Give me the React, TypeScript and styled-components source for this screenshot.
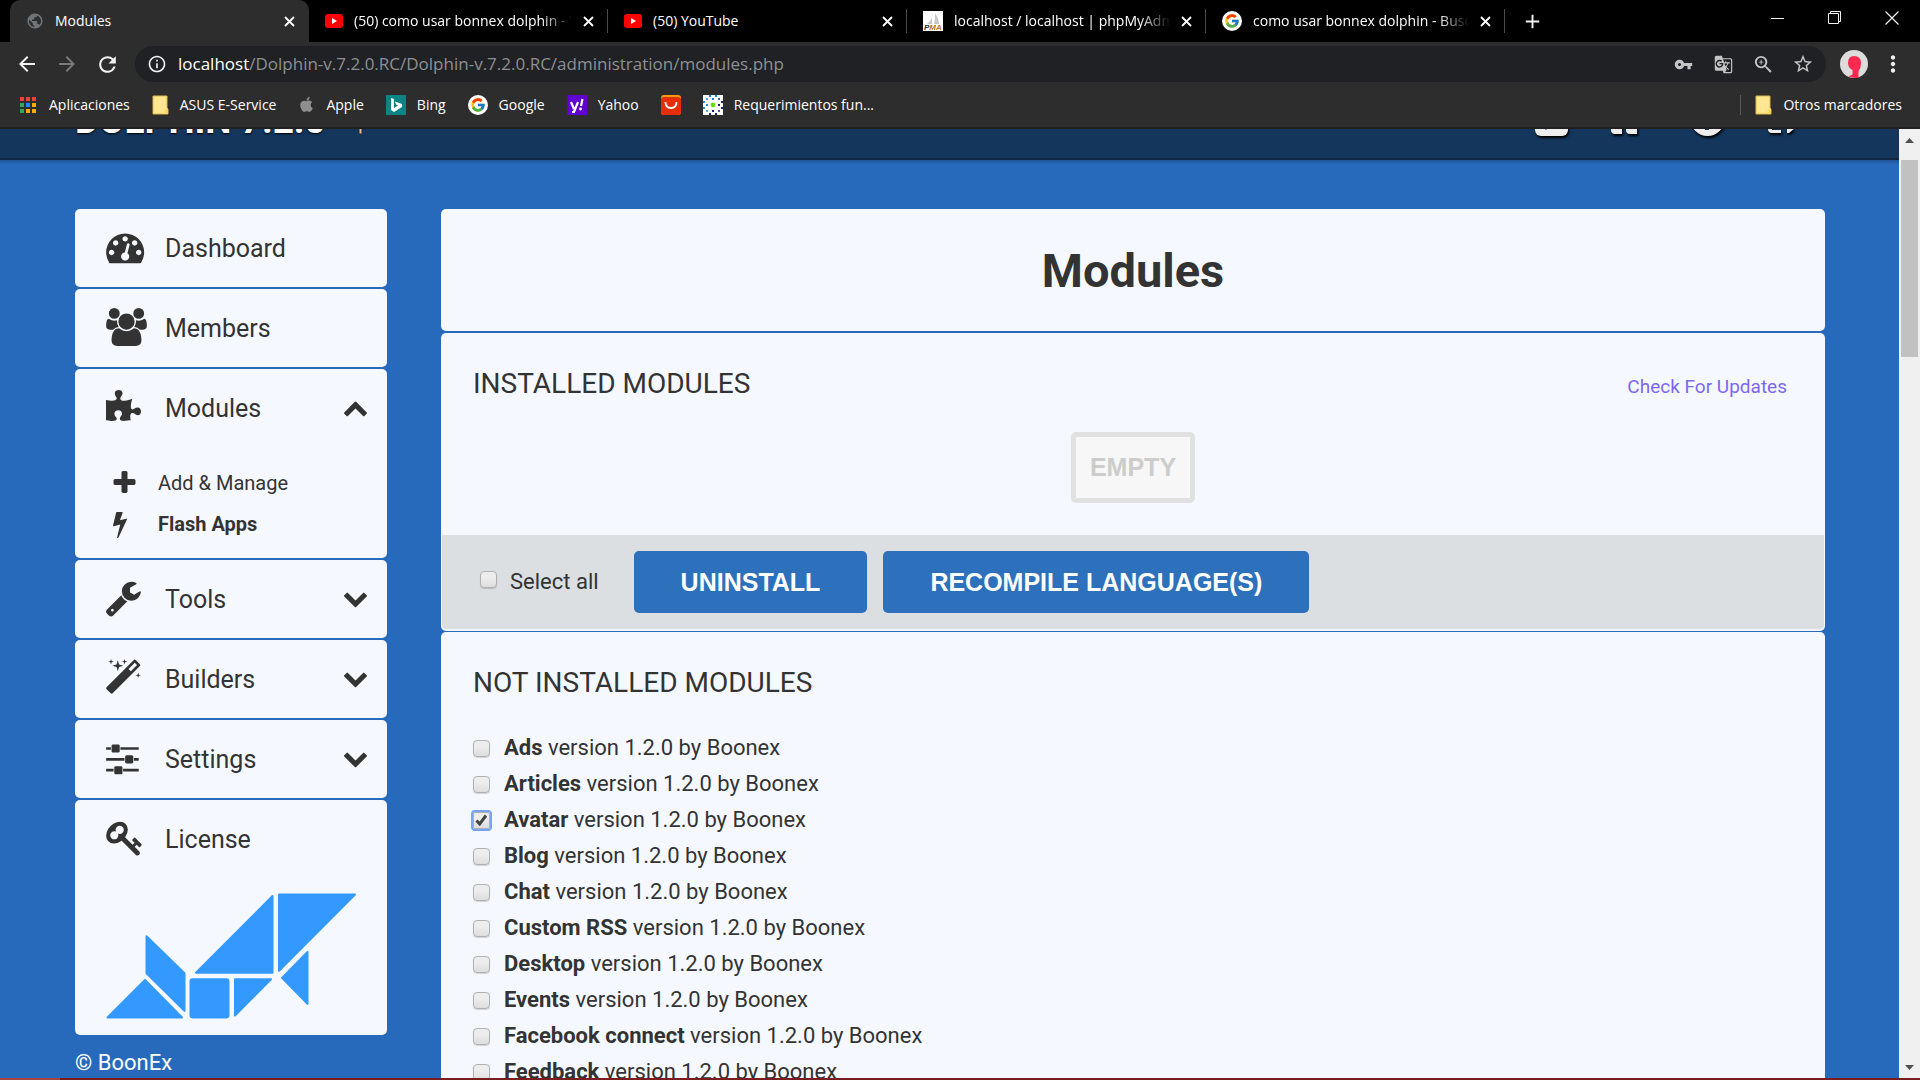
import React, { useState } from "react";
import styled, { createGlobalStyle, css } from "styled-components";
import { FaPuzzlePiece, FaApple } from "react-icons/fa";
import { FcGoogle } from "react-icons/fc";
import { MdArrowBack, MdArrowForward, MdRefresh, MdInfoOutline, MdVpnKey, MdGTranslate, MdZoomIn, MdStarBorder, MdMoreVert, MdAdd, MdPublic } from "react-icons/md";

const Global = createGlobalStyle`
  * { box-sizing: border-box; }
  body { margin: 0; background: #276abc; color: #333; font-family: Roboto, Arial, sans-serif; overflow: hidden; }
  button { border: 0; padding: 0; background: none; color: inherit; font: inherit; cursor: pointer; }
  a { color: inherit; text-decoration: none; }
  h1, h2, ul { margin: 0; padding: 0; }
  ul { list-style: none; }
`;

const Window = styled.div`
  height: 100vh;
  display: flex;
  flex-direction: column;
  overflow: hidden;
`;

/* ---------- browser frame ---------- */
const Chrome = styled.div`
  flex: none;
  background: #2d2d2d;
  color: #fff;
  font-family: "Open Sans", "Noto Sans", sans-serif;
  font-size: 14px;
  border-bottom: 2px solid #202020;
`;
const TabStrip = styled.div`
  display: flex;
  align-items: stretch;
  height: 42px;
  padding-left: 10px;
  background: #000;
`;
const Tab = styled.div<{ $active?: boolean }>`
  width: 299px;
  display: flex;
  align-items: center;
  gap: 11px;
  padding: 0 14px 0 16px;
  ${(p) =>
    p.$active
      ? css`background: #2d2d2d; border-radius: 10px 10px 0 0;`
      : css`background: linear-gradient(#4a4a4a, #4a4a4a) right 9px / 1px 24px no-repeat;`}
`;
const TabTitle = styled.button<{ $fade?: boolean }>`
  flex: 1;
  min-width: 0;
  overflow: hidden;
  white-space: nowrap;
  text-align: left;
  line-height: 20px;
  ${(p) => p.$fade && css`mask-image: linear-gradient(to right, #000 86%, transparent);`}
`;
const IconButton = styled.button<{ $dim?: boolean }>`
  display: flex;
  align-items: center;
  justify-content: center;
  color: ${(p) => (p.$dim ? "#797979" : "#f1f1f1")};
`;
const NewTab = styled(IconButton)`
  width: 54px;
`;
const WindowControls = styled.div`
  margin-left: auto;
  display: flex;
  height: 36px;
`;
const WindowButton = styled(IconButton)`
  width: 57px;
`;
const Toolbar = styled.div`
  display: flex;
  align-items: center;
  height: 44px;
  padding: 0 14px 0 7px;
`;
const NavButton = styled(IconButton)`
  width: 40px;
`;
const Address = styled.div`
  flex: 1;
  display: flex;
  align-items: center;
  height: 36px;
  margin-left: 8px;
  padding: 0 3px 0 12px;
  border-radius: 18px;
  background: #202124;
`;
const AddressText = styled.div`
  flex: 1;
  margin-left: 11px;
  font-size: 17px;
  line-height: 24px;
  color: #8d9094;
  span { color: #fff; }
`;
const Profile = styled.button`
  display: flex;
  margin: 0 12px 0 14px;
`;
const Bookmarks = styled.div`
  display: flex;
  align-items: center;
  height: 41px;
  gap: 22px;
  padding: 0 18px 4px 19px;
`;
const Bookmark = styled.a`
  display: flex;
  align-items: center;
  gap: 11px;
  line-height: 20px;
  white-space: nowrap;
`;
const OtherBookmarks = styled(Bookmark)`
  margin-left: auto;
  padding-left: 14px;
  border-left: 1px solid #5a5a5a;
`;

/* ---------- page ---------- */
const Viewport = styled.div`
  flex: 1;
  min-height: 0;
  display: flex;
`;
const Page = styled.div`
  flex: 1;
  min-width: 0;
  overflow: hidden;
`;
const TopBar = styled.header`
  display: flex;
  align-items: flex-end;
  height: 31px;
  padding: 0 74px 0 75px;
  overflow: hidden;
  background: #14365c;
  border-bottom: 2px solid #0f2742;
`;
const TopShadow = styled.div`
  height: 5px;
  background: linear-gradient(#1f5596, #276abc);
`;
const Brand = styled.a`
  display: flex;
  align-items: flex-end;
  gap: 33px;
  color: #fff;
  font-size: 37px;
  font-weight: 700;
  line-height: 40px;
  padding-bottom: 17px;
  text-shadow: 0 1px 2px #000;
  white-space: nowrap;
`;
const TopIcons = styled.nav`
  margin-left: auto;
  display: flex;
  padding-bottom: 22px;
  filter: drop-shadow(1px 2px 1px #000);
`;
const Columns = styled.div`
  display: grid;
  grid-template-columns: 312px minmax(0, 1fr);
  column-gap: 54px;
  align-items: start;
  padding: 44px 74px 0 75px;
`;
const Card = styled.section`
  background: #f5f9ff;
  border-radius: 5px;
`;
const Side = styled.aside`
  display: flex;
  flex-direction: column;
  gap: 2px;
`;
const MenuItem = styled.a`
  display: flex;
  align-items: center;
  height: 78px;
  padding: 0 20px 2px 31px;
  font-size: 25px;
  line-height: 32px;
`;
const MenuLabel = styled.span`
  flex: 1;
  margin-left: 18px;
  padding-top: 4px;
`;
const SubMenu = styled.ul`
  padding: 15px 0 14px 38px;
`;
const SubItem = styled.a<{ $strong?: boolean }>`
  display: grid;
  grid-template-columns: 45px 1fr;
  align-items: center;
  height: 41px;
  font-size: 20px;
  font-weight: ${(p) => (p.$strong ? 700 : 400)};
`;
const LogoLink = styled.a`
  display: block;
  padding: 15px 31px 16px;
  svg { display: block; }
`;
const Copyright = styled.p`
  margin: 12px 0 0;
  color: #fff;
  font-size: 22px;
  line-height: 28px;
`;
const Main = styled.main`
  display: flex;
  flex-direction: column;
`;
const TitleCard = styled(Card)`
  padding: 32px 0 30px;
  margin-bottom: 2px;
  text-align: center;
`;
const Title = styled.h1`
  font-size: 47px;
  line-height: 60px;
  font-weight: 700;
`;
const InstalledCard = styled(Card)`
  padding: 0 1px 2px;
  margin-bottom: 1px;
`;
const CardHead = styled.div`
  display: flex;
  align-items: baseline;
  justify-content: space-between;
  padding: 33px 37px 0 31px;
`;
const Heading = styled.h2`
  font-size: 28px;
  line-height: 36px;
  font-weight: 400;
`;
const UpdateLink = styled.a`
  color: #7b68ee;
  font-size: 19px;
`;
const Empty = styled.div`
  width: fit-content;
  margin: 30px auto 32px;
  padding: 14px;
  border: 5px solid #e1e1e1;
  border-radius: 5px;
  background: #f7f7f7;
  color: #ccc;
  font: 700 25px/33px "Liberation Sans", Arial, sans-serif;
`;
const ActionBar = styled.div`
  display: flex;
  align-items: center;
  gap: 16px;
  padding: 16px 38px;
  background: #dbdfe2;
  border-radius: 0 0 4px 4px;
`;
const Check = styled.input`
  appearance: none;
  flex: none;
  width: 17px;
  height: 17px;
  margin: 0;
  border: 1px solid #b0b0b0;
  border-radius: 4px;
  background: linear-gradient(#ededed 38%, #dedede);
  box-shadow: 0 1px 1px rgba(0, 0, 0, 0.15);
  &:checked {
    background: url("data:image/svg+xml,%3Csvg xmlns='http://www.w3.org/2000/svg' viewBox='0 0 17 17'%3E%3Cpath d='M3.500 8.500l3.200 3.500L13 3.500' fill='none' stroke='%23444' stroke-width='3'/%3E%3C/svg%3E") center / 17px no-repeat, linear-gradient(#ededed 38%, #dedede);
    border-radius: 2px;
    outline: 2px solid #76a5f5;
    outline-offset: 0;
  }
`;
const SelectAll = styled.label`
  display: flex;
  align-items: center;
  gap: 13px;
  margin-right: 19px;
  font-size: 22px;
  line-height: 28px;
  ${Check} { margin-bottom: 6px; }
`;
const Action = styled.button`
  height: 62px;
  padding: 0 47px;
  border-radius: 5px;
  background: #2d70bb;
  color: #fff;
  font: 700 25px/32px "Liberation Sans", Arial, sans-serif;
`;
const AvailableCard = styled(Card)`
  padding: 33px 32px 40px;
`;
const ModuleList = styled.ul`
  margin-top: 29px;
`;
const ModuleRow = styled.label`
  display: flex;
  align-items: center;
  gap: 14px;
  height: 36px;
  font-size: 22px;
  line-height: 28px;
`;

const ScrollTrack = styled.div`
  flex: none;
  width: 21px;
  display: flex;
  flex-direction: column;
  align-items: center;
  background: #f0f0f0;
`;
const ScrollArrow = styled(IconButton)`
  height: 22px;
`;
const ScrollThumb = styled.div`
  width: 17px;
  height: 197px;
  margin: 9px 0 auto;
  background: #c1c1c1;
`;
const BottomEdge = styled.div`
  flex: none;
  height: 2px;
  background: linear-gradient(to right, #a44543 60px, #7a1c1e 60px);
`;

/* ---------- icons ---------- */
const glyphs = {
  dashboard: { x: 0, d: "M384 1152q0-53-37.5-90.5t-90.5-37.5-90.5 37.5-37.5 90.5 37.5 90.5 90.5 37.5 90.5-37.5 37.5-90.5zm192-448q0-53-37.5-90.5t-90.5-37.5-90.5 37.5-37.5 90.5 37.5 90.5 90.5 37.5 90.5-37.5 37.5-90.5zm428 481l101-382q6-26-7.5-48.5t-38.5-29.5-48 6.5-30 39.5l-101 382q-60 5-107 43.5t-63 98.5q-20 77 20 146t117 89 146-20 89-117q16-60-6-117t-72-91zm660-33q0-53-37.5-90.5t-90.5-37.5-90.5 37.5-37.5 90.5 37.5 90.5 90.5 37.5 90.5-37.5 37.5-90.5zm-640-640q0-53-37.5-90.5t-90.5-37.5-90.5 37.5-37.5 90.5 37.5 90.5 90.5 37.5 90.5-37.5 37.5-90.5zm448 192q0-53-37.5-90.5t-90.5-37.5-90.5 37.5-37.5 90.5 37.5 90.5 90.5 37.5 90.5-37.5 37.5-90.5zm320 448q0 261-141 483-19 29-54 29h-1402q-35 0-54-29-141-221-141-483 0-182 71-348t191-286 286-191 348-71 348 71 286 191 191 286 71 348z" },
  members: { x: 0, d: "M593 896q-162 5-265 128h-134q-82 0-138-40.5t-56-118.5q0-353 124-353 6 0 43.5 21t97.500 42.500 119 21.500q67 0 133-23-5 37-5 66 0 139 81 256zm1071 637q0 120-73 189.500t-194 69.500h-874q-121 0-194-69.500t-73-189.500q0-53 3.500-103.500t14-109 26.500-108.500 43-97.500 62-81 85.500-53.500 111.500-20q10 0 43 21.500t73 48 107 48 135 21.500 135-21.500 107-48 73-48 43-21.500q61 0 111.500 20t85.500 53.500 62 81 43 97.500 26.500 108.500 14 109 3.500 103.500zm-1024-1277q0 106-75 181t-181 75-181-75-75-181 75-181 181-75 181 75 75 181zm704 384q0 159-112.500 271.500t-271.500 112.500-271.500-112.500-112.500-271.500 112.500-271.500 271.500-112.500 271.500 112.500 112.500 271.500zm576 225q0 78-56 118.500t-138 40.500h-134q-103-123-265-128 81-117 81-256 0-29-5-66 66 23 133 23 59 0 119-21.500t97.500-42.500 43.500-21q124 0 124 353zm-128-609q0 106-75 181t-181 75-181-75-75-181 75-181 181-75 181 75 75 181z" },
  tools: { x: 90, d: "M448 1472q0-26-19-45t-45-19-45 19-19 45 19 45 45 19 45-19 19-45zm644-420l-682 682q-37 37-90 37-52 0-91-37l-106-108q-38-36-38-90 0-53 38-91l681-681q39 98 114.500 173.500t173.500 114.500zm634-435q0 39-23 106-47 134-164.500 217.500t-258.500 83.500q-185 0-316.500-131.500t-131.500-316.500 131.500-316.500 316.500-131.500q58 0 121.500 16.500t107.500 46.500q16 11 16 28t-16 28l-293 169v224l193 107q5-3 79-48.500t135.500-81 70.500-35.500q15 0 23.500 10t8.500 25z" },
  builders: { x: 90, d: "M1254 581l293-293-107-107-293 293zm447-293q0 27-18 45l-1286 1286q-18 18-45 18t-45-18l-198-198q-18-18-18-45t18-45l1286-1286q18-18 45-18t45 18l198 198q18 18 18 45zm-1351-190l98 30-98 30-30 98-30-98-98-30 98-30 30-98zm350 162l196 60-196 60-60 196-60-196-196-60 196-60 60-196zm930 478l98 30-98 30-30 98-30-98-98-30 98-30 30-98zm-640-640l98 30-98 30-30 98-30-98-98-30 98-30 30-98z" },
  settings: { x: 128, d: "M480 1408v128h-352v-128h352zm352-128q26 0 45 19t19 45v256q0 26-19 45t-45 19h-256q-26 0-45-19t-19-45v-256q0-26 19-45t45-19h256zm160-384v128h-864v-128h864zm-640-512v128h-224v-128h224zm1312 1024v128h-736v-128h736zm-960-1152q26 0 45 19t19 45v256q0 26-19 45t-45 19h-256q-26 0-45-19t-19-45v-256q0-26 19-45t45-19h256zm640 512q26 0 45 19t19 45v256q0 26-19 45t-45 19h-256q-26 0-45-19t-19-45v-256q0-26 19-45t45-19h256zm320 128v128h-224v-128h224zm0-512v128h-864v-128h864z" },
  license: { x: 0, d: "M832 512q0-80-56-136t-136-56-136 56-56 136q0 42 19 83-41-19-83-19-80 0-136 56t-56 136 56 136 136 56 136-56 56-136q0-42-19-83 41 19 83 19 80 0 136-56t56-136zm851 704q0 17-49 66t-66 49q-9 0-28.500-16t-36.500-33-38.500-40-24.500-26l-96 96 220 220q28 28 28 68 0 42-39 81t-81 39q-40 0-68-28l-671-671q-176 131-365 131-163 0-265.500-102.500t-102.500-265.500q0-160 95-313t248-248 313-95q163 0 265.500 102.500t102.500 265.500q0 189-131 365l355 355 96-96q-3-3-26-24.500t-40-38.500-33-36.500-16-28.500q0-17 49-66t66-49q13 0 23 10 6 6 46 44.500t82 79.500 86.500 86 73 78 28.500 41z" },
} as const;

const Glyph = ({ name }: { name: keyof typeof glyphs }) => (
  <svg width="41" height="38" viewBox={`${glyphs[name].x} 0 1920 1792`} fill="currentColor" aria-hidden="true">
    <path d={glyphs[name].d} />
  </svg>
);
const Chevron = ({ up }: { up?: boolean }) => (
  <svg width="23" height="26" viewBox="90 0 1612 1822" fill="currentColor" aria-hidden="true">
    <path transform={up ? "rotate(180 896 1050)" : undefined} d="M1683 808l-742 741q-19 19-45 19t-45-19l-742-741q-19-19-19-45.500t19-45.500l166-165q19-19 45-19t45 19l531 531 531-531q19-19 45-19t45 19l166 165q19 19 19 45.500t-19 45.500z" />
  </svg>
);
const Plus = () => (
  <svg width="23" height="28" viewBox="192 0 1408 1792" fill="currentColor" aria-hidden="true">
    <path d="M1600 736v192q0 40-28 68t-68 28h-416v416q0 40-28 68t-68 28h-192q-40 0-68-28t-28-68v-416h-416q-40 0-68-28t-28-68v-192q0-40 28-68t68-28h416v-416q0-40 28-68t68-28h192q40 0 68 28t28 68v416h416q40 0 68 28t28 68z" />
  </svg>
);
const Bolt = () => (
  <svg width="14" height="28" viewBox="448 0 896 1792" fill="currentColor" aria-hidden="true">
    <path d="M1333 566q18 20 7 44l-540 1157q-13 25-42 25-4 0-14-2-17-5-25.500-19t-4.500-30l197-808-406 101q-4 1-12 1-18 0-31-11-18-15-13-39l201-825q4-14 16-23t28-9h328q19 0 32 12.500t13 29.500q0 8-5 18l-171 463 396-98q8-2 12-2 19 0 34 15z" />
  </svg>
);
const DolphinLogo = () => (
  <svg width="250" height="126" viewBox="0 0 250 124" preserveAspectRatio="none" fill="#3399ff" stroke="#3399ff" strokeWidth="2" strokeLinejoin="round" aria-hidden="true">
    <path d="M90 78.500L166.500 3V78.500zM173 1.500H249L173 76.500zM40.500 42.500L78.500 79V116L40.500 79zM1.500 122.500L39 85.500 76 122.500zM129 85H165L129 120.500zM176 83.500L201.500 58V109z" />
    <rect x="84.500" y="85" width="38" height="37.500" rx="2" />
  </svg>
);
const Folder = () => (
  <svg width="17" height="20" viewBox="0 0 17 20" aria-hidden="true">
    <path d="M1 1h14v12l1 1v5H1z" fill="#ffe693" stroke="#dfb845" />
    <path d="M12.500 19v-4l3-1.500V19z" fill="#ffd75e" />
  </svg>
);
const AppsGrid = () => (
  <svg width="19" height="18" viewBox="0 0 19 18" aria-hidden="true">
    {["#ea4335", "#ea4335", "#ea4335", "#34a853", "#1a8cff", "#fbad05", "#34a853", "#fbad05", "#fbad05"].map((c, i) => (
      <rect key={i} x={1 + (i % 3) * 6} y={1 + Math.floor(i / 3) * 6} width="4" height="4" fill={c} />
    ))}
  </svg>
);
const YouTube = () => (
  <svg width="18" height="14" viewBox="0 0 18 14" aria-hidden="true">
    <rect width="18" height="14" rx="3" fill="#f00" />
    <path d="M7 4l5 3-5 3z" fill="#fff" />
  </svg>
);
const Google = () => (
  <svg width="20" height="20" viewBox="0 0 20 20" aria-hidden="true">
    <circle cx="10" cy="10" r="10" fill="#fff" />
    <svg x="2" y="2" width="16" height="16" viewBox="0 0 16 16"><FcGoogle size={16} /></svg>
  </svg>
);
const PhpMyAdmin = () => (
  <svg width="20" height="20" viewBox="0 0 20 20" aria-hidden="true">
    <rect width="20" height="20" fill="#fff" />
    <path d="M9 1c1 4 0 8-5 12h5zM12 2c3 4 4 8 4 11h-5c1-4 1-7 1-11z" fill="#c8c8c8" />
    <text x="1" y="19" fontSize="8" fontWeight="700" fontStyle="italic" fontFamily="Liberation Sans" fill="#2b2b4b">P<tspan fill="#b8741a">MA</tspan></text>
  </svg>
);
const Bing = () => (
  <svg width="20" height="20" viewBox="0 0 20 20" aria-hidden="true">
    <rect width="20" height="20" fill="#0c8484" />
    <path d="M5 3l3 1v9l4-2.500-2-1-1-3 7 2.500v3l-8 5-3-2z" fill="#fff" />
  </svg>
);
const Yahoo = () => (
  <svg width="20" height="20" viewBox="0 0 20 20" aria-hidden="true">
    <rect width="20" height="20" fill="#6001d2" />
    <path d="M4 7l3 7M11 7l-4 10H5M15.500 4l-1.500 7" fill="none" stroke="#fff" strokeWidth="2.200" />
    <circle cx="13.500" cy="14" r="1.400" fill="#fff" />
  </svg>
);
const AliExpress = () => (
  <svg width="20" height="20" viewBox="0 0 20 20" aria-hidden="true">
    <rect width="20" height="20" rx="3" fill="#ff9a00" />
    <path d="M0 4q0-1 2-2h16q2 1 2 2v13q0 3-3 3H3q-3 0-3-3z" fill="#e62e04" />
    <path d="M4.500 7q0 6 5.500 6t5.500-6" fill="none" stroke="#fff" strokeWidth="1.800" />
  </svg>
);
const Pattern = () => (
  <svg width="20" height="20" viewBox="0 0 20 20" aria-hidden="true">
    <rect width="20" height="20" fill="#fff" />
    {[0, 90, 180, 270].map((r, i) => (
      <g key={r} transform={`rotate(${r} 10 10)`} fill={["#1f7be0", "#20207a", "#20207a", "#2a8fc8"][i]}>
        <rect x="6" y="0" width="2" height="2" /><rect x="12" y="0" width="2" height="2" />
        <rect x="9" y="3" width="2" height="2" /><circle cx="4" cy="4" r="1" />
      </g>
    ))}
    <circle cx="10" cy="10" r="2.400" fill="#66e010" />
  </svg>
);
const Avatar = () => (
  <svg width="28" height="28" viewBox="0 0 28 28" aria-hidden="true">
    <circle cx="14" cy="14" r="14" fill="#dcdcdc" />
    <path d="M14 6q7 0 7 7 0 5-2.500 8v7q-4 .5-10-1.500l4-2V20Q8 18 8 13q0-7 6-7z" fill="#ff2850" />
  </svg>
);
const Minimize = () => <svg width="13" height="13" viewBox="0 0 13 13" aria-hidden="true"><path d="M0 6.500h13" stroke="currentColor" /></svg>;
const Restore = () => <svg width="14" height="14" viewBox="0 0 14 14" aria-hidden="true"><path d="M.5 2.500h10v10H.5zM2.500 2V.5h10v10H11" fill="none" stroke="currentColor" /></svg>;
const CloseWindow = () => <svg width="14" height="14" viewBox="0 0 14 14" aria-hidden="true"><path d="M.5.5l13 13M13.500.5L.5 13.500" stroke="currentColor" strokeWidth="1.200" /></svg>;
const TabClose = () => <svg width="11" height="11" viewBox="0 0 11 11" aria-hidden="true"><path d="M1 1l9 9M10 1L1 10" stroke="#fff" strokeWidth="1.800" /></svg>;
const Triangle = ({ down }: { down?: boolean }) => <svg width="9" height="5" viewBox="0 0 9 5" aria-hidden="true"><path d={down ? "M0 0h9L4.500 5z" : "M0 5h9L4.500 0z"} fill="#505050" /></svg>;
const BrandMark = () => <svg width="3" height="12" viewBox="0 0 3 12" aria-hidden="true"><path d="M1.500 0v4.500" stroke="#f0b080" strokeWidth="2" /></svg>;
const AccountIcons = () => (
  <svg width="290" height="28" viewBox="0 0 290 28" fill="#eee" aria-hidden="true">
    <rect x="0" y="0" width="33" height="28" rx="6" />
    <path d="M8 19l3 3 3-3z" fill="#14365c" />
    <path d="M76 8h11v18H80q-4 0-4-4zM91 8h11v18h-7q-4 0-4-4z" />
    <circle cx="172.500" cy="10.500" r="17.500" />
    <path d="M170 18h4v4h-4z" fill="#14365c" />
    <path d="M233 8h4v14h9v3h-9q-4 0-4-4zM252 20h8l-6 5h-2z" />
  </svg>
);

const tabs = [
  { title: "Modules", icon: <MdPublic size={18} color="#6f7479" />, active: true },
  { title: "(50) como usar bonnex dolphin - YouTube", icon: <YouTube />, fade: true },
  { title: "(50) YouTube", icon: <YouTube /> },
  { title: "localhost / localhost | phpMyAdmin", icon: <PhpMyAdmin />, fade: true },
  { title: "como usar bonnex dolphin - Buscar", icon: <Google />, fade: true },
];
const bookmarks = [
  { label: "Aplicaciones", icon: <AppsGrid /> },
  { label: "ASUS E-Service", icon: <Folder /> },
  { label: "Apple", icon: <FaApple size={17} color="#8e8e8e" /> },
  { label: "Bing", icon: <Bing /> },
  { label: "Google", icon: <Google /> },
  { label: "Yahoo", icon: <Yahoo /> },
  { label: "", icon: <AliExpress /> },
  { label: "Requerimientos fun...", icon: <Pattern /> },
];
const moduleNames = ["Ads", "Articles", "Avatar", "Blog", "Chat", "Custom RSS", "Desktop", "Events", "Facebook connect", "Feedback"];

const BrowserChrome = () => (
  <Chrome>
    <TabStrip>
      {tabs.map((t) => (
        <Tab key={t.title} $active={t.active}>
          {t.icon}
          <TabTitle $fade={t.fade}>{t.title}</TabTitle>
          <IconButton aria-label="Close tab"><TabClose /></IconButton>
        </Tab>
      ))}
      <NewTab aria-label="New tab"><MdAdd size={23} /></NewTab>
      <WindowControls>
        <WindowButton aria-label="Minimize"><Minimize /></WindowButton>
        <WindowButton aria-label="Restore"><Restore /></WindowButton>
        <WindowButton aria-label="Close"><CloseWindow /></WindowButton>
      </WindowControls>
    </TabStrip>
    <Toolbar>
      <NavButton aria-label="Back"><MdArrowBack size={24} /></NavButton>
      <NavButton aria-label="Forward" $dim><MdArrowForward size={24} /></NavButton>
      <NavButton aria-label="Reload"><MdRefresh size={25} /></NavButton>
      <Address>
        <IconButton aria-label="Site information"><MdInfoOutline size={20} /></IconButton>
        <AddressText><span>localhost</span>/Dolphin-v.7.2.0.RC/Dolphin-v.7.2.0.RC/administration/modules.php</AddressText>
        <NavButton aria-label="Passwords"><MdVpnKey size={19} color="#c4c4c4" /></NavButton>
        <NavButton aria-label="Translate"><MdGTranslate size={19} color="#c4c4c4" /></NavButton>
        <NavButton aria-label="Zoom"><MdZoomIn size={23} color="#c4c4c4" /></NavButton>
        <NavButton aria-label="Bookmark"><MdStarBorder size={22} color="#c4c4c4" /></NavButton>
      </Address>
      <Profile aria-label="Profile"><Avatar /></Profile>
      <IconButton aria-label="Menu"><MdMoreVert size={26} /></IconButton>
    </Toolbar>
    <Bookmarks>
      {bookmarks.map((b) => (
        <Bookmark key={b.label} href="#" aria-label={b.label || "AliExpress"}>{b.icon}{b.label}</Bookmark>
      ))}
      <OtherBookmarks href="#"><Folder />Otros marcadores</OtherBookmarks>
    </Bookmarks>
  </Chrome>
);

const CollapsedItem = ({ name, label }: { name: keyof typeof glyphs; label: string }) => (
  <Card><MenuItem href="#"><Glyph name={name} /><MenuLabel>{label}</MenuLabel><Chevron /></MenuItem></Card>
);

const Sidebar = () => (
  <Side>
    <Card><MenuItem href="#"><Glyph name="dashboard" /><MenuLabel>Dashboard</MenuLabel></MenuItem></Card>
    <Card><MenuItem href="#"><Glyph name="members" /><MenuLabel>Members</MenuLabel></MenuItem></Card>
    <Card>
      <MenuItem href="#">
        <svg width="41" height="38" viewBox="0 0 41 38" aria-hidden="true"><FaPuzzlePiece size={35} /></svg>
        <MenuLabel>Modules</MenuLabel>
        <Chevron up />
      </MenuItem>
      <SubMenu>
        <li><SubItem href="#"><Plus />Add &amp; Manage</SubItem></li>
        <li><SubItem href="#" $strong><Bolt />Flash Apps</SubItem></li>
      </SubMenu>
    </Card>
    <CollapsedItem name="tools" label="Tools" />
    <CollapsedItem name="builders" label="Builders" />
    <CollapsedItem name="settings" label="Settings" />
    <Card>
      <MenuItem href="#"><Glyph name="license" /><MenuLabel>License</MenuLabel></MenuItem>
      <LogoLink href="#" aria-label="Dolphin"><DolphinLogo /></LogoLink>
    </Card>
    <Copyright>© BoonEx</Copyright>
  </Side>
);

export default function App() {
  const [selected, setSelected] = useState<string[]>(["Avatar"]);
  const toggle = (name: string) =>
    setSelected((s) => (s.includes(name) ? s.filter((n) => n !== name) : [...s, name]));

  return (
    <Window>
      <Global />
      <BrowserChrome />
      <Viewport>
        <Page>
          <TopBar>
            <Brand href="#">DOLPHIN 7.2.0<BrandMark /></Brand>
            <TopIcons aria-label="Account"><AccountIcons /></TopIcons>
          </TopBar>
          <TopShadow />
          <Columns>
            <Sidebar />
            <Main>
              <TitleCard><Title>Modules</Title></TitleCard>
              <InstalledCard>
                <CardHead>
                  <Heading>INSTALLED MODULES</Heading>
                  <UpdateLink href="#">Check For Updates</UpdateLink>
                </CardHead>
                <Empty>EMPTY</Empty>
                <ActionBar>
                  <SelectAll><Check type="checkbox" />Select all</SelectAll>
                  <Action>UNINSTALL</Action>
                  <Action>RECOMPILE LANGUAGE(S)</Action>
                </ActionBar>
              </InstalledCard>
              <AvailableCard>
                <Heading>NOT INSTALLED MODULES</Heading>
                <ModuleList>
                  {moduleNames.map((name) => (
                    <li key={name}>
                      <ModuleRow>
                        <Check type="checkbox" checked={selected.includes(name)} onChange={() => toggle(name)} />
                        <span><b>{name}</b> version 1.2.0 by Boonex</span>
                      </ModuleRow>
                    </li>
                  ))}
                </ModuleList>
              </AvailableCard>
            </Main>
          </Columns>
        </Page>
        <ScrollTrack>
          <ScrollArrow aria-label="Scroll up"><Triangle /></ScrollArrow>
          <ScrollThumb />
          <ScrollArrow aria-label="Scroll down"><Triangle down /></ScrollArrow>
        </ScrollTrack>
      </Viewport>
      <BottomEdge />
    </Window>
  );
}
